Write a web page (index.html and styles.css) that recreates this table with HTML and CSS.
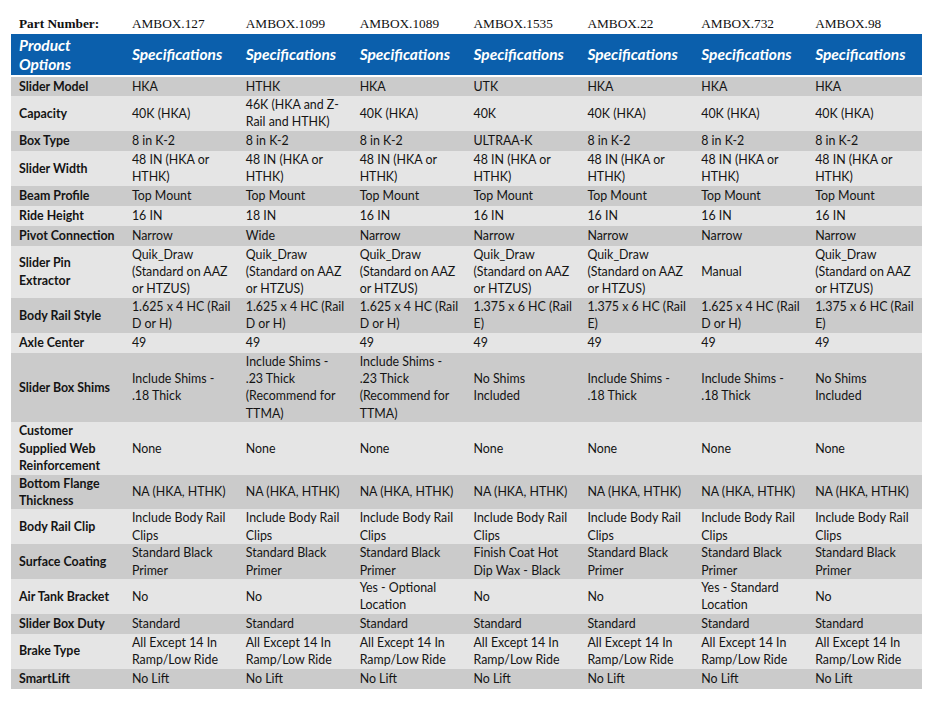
FILE: index.html
```html
<!DOCTYPE html>
<html lang="en">
<head>
<meta charset="utf-8">
<title>Slider Box Specifications</title>
<link rel="stylesheet" href="styles.css">
</head>
<body>
<table class="spec-table">
  <colgroup>
    <col><col><col><col><col><col><col><col>
  </colgroup>
  <thead>
    <tr class="part-row">
      <th class="part-label">Part Number:</th>
      <td>AMBOX.127</td>
      <td>AMBOX.1099</td>
      <td>AMBOX.1089</td>
      <td>AMBOX.1535</td>
      <td>AMBOX.22</td>
      <td>AMBOX.732</td>
      <td>AMBOX.98</td>
    </tr>
    <tr class="head-row">
      <th>Product<br>Options</th>
      <th>Specifications</th>
      <th>Specifications</th>
      <th>Specifications</th>
      <th>Specifications</th>
      <th>Specifications</th>
      <th>Specifications</th>
      <th>Specifications</th>
    </tr>
  </thead>
  <tbody>
    <tr class="dark">
      <th>Slider Model</th>
      <td>HKA</td><td>HTHK</td><td>HKA</td><td>UTK</td><td>HKA</td><td>HKA</td><td>HKA</td>
    </tr>
    <tr class="light">
      <th>Capacity</th>
      <td>40K (HKA)</td><td>46K (HKA and Z-<br>Rail and HTHK)</td><td>40K (HKA)</td><td>40K</td><td>40K (HKA)</td><td>40K (HKA)</td><td>40K (HKA)</td>
    </tr>
    <tr class="dark">
      <th>Box Type</th>
      <td>8 in K-2</td><td>8 in K-2</td><td>8 in K-2</td><td>ULTRAA-K</td><td>8 in K-2</td><td>8 in K-2</td><td>8 in K-2</td>
    </tr>
    <tr class="light">
      <th>Slider Width</th>
      <td>48 IN (HKA or<br>HTHK)</td><td>48 IN (HKA or<br>HTHK)</td><td>48 IN (HKA or<br>HTHK)</td><td>48 IN (HKA or<br>HTHK)</td><td>48 IN (HKA or<br>HTHK)</td><td>48 IN (HKA or<br>HTHK)</td><td>48 IN (HKA or<br>HTHK)</td>
    </tr>
    <tr class="dark">
      <th>Beam Profile</th>
      <td>Top Mount</td><td>Top Mount</td><td>Top Mount</td><td>Top Mount</td><td>Top Mount</td><td>Top Mount</td><td>Top Mount</td>
    </tr>
    <tr class="light">
      <th>Ride Height</th>
      <td>16 IN</td><td>18 IN</td><td>16 IN</td><td>16 IN</td><td>16 IN</td><td>16 IN</td><td>16 IN</td>
    </tr>
    <tr class="dark">
      <th>Pivot Connection</th>
      <td>Narrow</td><td>Wide</td><td>Narrow</td><td>Narrow</td><td>Narrow</td><td>Narrow</td><td>Narrow</td>
    </tr>
    <tr class="light">
      <th>Slider Pin<br>Extractor</th>
      <td>Quik_Draw<br>(Standard on AAZ<br>or HTZUS)</td><td>Quik_Draw<br>(Standard on AAZ<br>or HTZUS)</td><td>Quik_Draw<br>(Standard on AAZ<br>or HTZUS)</td><td>Quik_Draw<br>(Standard on AAZ<br>or HTZUS)</td><td>Quik_Draw<br>(Standard on AAZ<br>or HTZUS)</td><td>Manual</td><td>Quik_Draw<br>(Standard on AAZ<br>or HTZUS)</td>
    </tr>
    <tr class="dark">
      <th>Body Rail Style</th>
      <td>1.625 x 4 HC (Rail<br>D or H)</td><td>1.625 x 4 HC (Rail<br>D or H)</td><td>1.625 x 4 HC (Rail<br>D or H)</td><td>1.375 x 6 HC (Rail<br>E)</td><td>1.375 x 6 HC (Rail<br>E)</td><td>1.625 x 4 HC (Rail<br>D or H)</td><td>1.375 x 6 HC (Rail<br>E)</td>
    </tr>
    <tr class="light">
      <th>Axle Center</th>
      <td>49</td><td>49</td><td>49</td><td>49</td><td>49</td><td>49</td><td>49</td>
    </tr>
    <tr class="dark">
      <th>Slider Box Shims</th>
      <td>Include Shims -<br>.18 Thick</td><td>Include Shims -<br>.23 Thick<br>(Recommend for<br>TTMA)</td><td>Include Shims -<br>.23 Thick<br>(Recommend for<br>TTMA)</td><td>No Shims<br>Included</td><td>Include Shims -<br>.18 Thick</td><td>Include Shims -<br>.18 Thick</td><td>No Shims<br>Included</td>
    </tr>
    <tr class="light">
      <th>Customer<br>Supplied Web<br>Reinforcement</th>
      <td>None</td><td>None</td><td>None</td><td>None</td><td>None</td><td>None</td><td>None</td>
    </tr>
    <tr class="dark">
      <th>Bottom Flange<br>Thickness</th>
      <td>NA (HKA, HTHK)</td><td>NA (HKA, HTHK)</td><td>NA (HKA, HTHK)</td><td>NA (HKA, HTHK)</td><td>NA (HKA, HTHK)</td><td>NA (HKA, HTHK)</td><td>NA (HKA, HTHK)</td>
    </tr>
    <tr class="light">
      <th>Body Rail Clip</th>
      <td>Include Body Rail<br>Clips</td><td>Include Body Rail<br>Clips</td><td>Include Body Rail<br>Clips</td><td>Include Body Rail<br>Clips</td><td>Include Body Rail<br>Clips</td><td>Include Body Rail<br>Clips</td><td>Include Body Rail<br>Clips</td>
    </tr>
    <tr class="dark">
      <th>Surface Coating</th>
      <td>Standard Black<br>Primer</td><td>Standard Black<br>Primer</td><td>Standard Black<br>Primer</td><td>Finish Coat Hot<br>Dip Wax - Black</td><td>Standard Black<br>Primer</td><td>Standard Black<br>Primer</td><td>Standard Black<br>Primer</td>
    </tr>
    <tr class="light">
      <th>Air Tank Bracket</th>
      <td>No</td><td>No</td><td>Yes - Optional<br>Location</td><td>No</td><td>No</td><td>Yes - Standard<br>Location</td><td>No</td>
    </tr>
    <tr class="dark">
      <th>Slider Box Duty</th>
      <td>Standard</td><td>Standard</td><td>Standard</td><td>Standard</td><td>Standard</td><td>Standard</td><td>Standard</td>
    </tr>
    <tr class="light">
      <th>Brake Type</th>
      <td>All Except 14 In<br>Ramp/Low Ride</td><td>All Except 14 In<br>Ramp/Low Ride</td><td>All Except 14 In<br>Ramp/Low Ride</td><td>All Except 14 In<br>Ramp/Low Ride</td><td>All Except 14 In<br>Ramp/Low Ride</td><td>All Except 14 In<br>Ramp/Low Ride</td><td>All Except 14 In<br>Ramp/Low Ride</td>
    </tr>
    <tr class="dark">
      <th>SmartLift</th>
      <td>No Lift</td><td>No Lift</td><td>No Lift</td><td>No Lift</td><td>No Lift</td><td>No Lift</td><td>No Lift</td>
    </tr>
  </tbody>
</table>
</body>
</html>
```

FILE: styles.css
```css
html, body {
  margin: 0;
  padding: 0;
  background: #ffffff;
}

.spec-table {
  margin: 10px 0 0 11px;
  width: 911px;
  table-layout: fixed;
  border-collapse: collapse;
  border-spacing: 0;
  font-family: Lato, "Open Sans", "Liberation Sans", sans-serif;
  font-size: 12.4px;
  line-height: 17.4px;
  color: #141414;
}

.spec-table th,
.spec-table td {
  padding: 0 6px 0 7px;
  text-align: left;
  vertical-align: middle;
  white-space: nowrap;
  font-weight: normal;
}

.spec-table tbody th {
  padding-left: 8px;
  font-weight: bold;
}

.spec-table tbody tr {
  height: 20px;
}

.dark {
  background: #cbcbcb;
}

.light {
  background: #e5e5e5;
}

/* Part number row */
.part-row th,
.part-row td {
  height: 21px;
  padding-bottom: 3px;
  vertical-align: bottom;
  font-family: "Liberation Serif", "Times New Roman", serif;
  font-size: 13.3px;
  line-height: 15px;
  color: #111111;
}

.part-row .part-label {
  padding-left: 8px;
  font-weight: bold;
}

/* Blue heading row */
.head-row {
  background: #0b5fac;
}

.head-row th {
  height: 41px;
  padding-top: 0;
  padding-bottom: 0;
  color: #ffffff;
  font-size: 15.5px;
  line-height: 19px;
  font-weight: bold;
  font-style: italic;
  border-bottom: 2px solid #ffffff;
}

.head-row th:first-child {
  padding-left: 8px;
}
```
